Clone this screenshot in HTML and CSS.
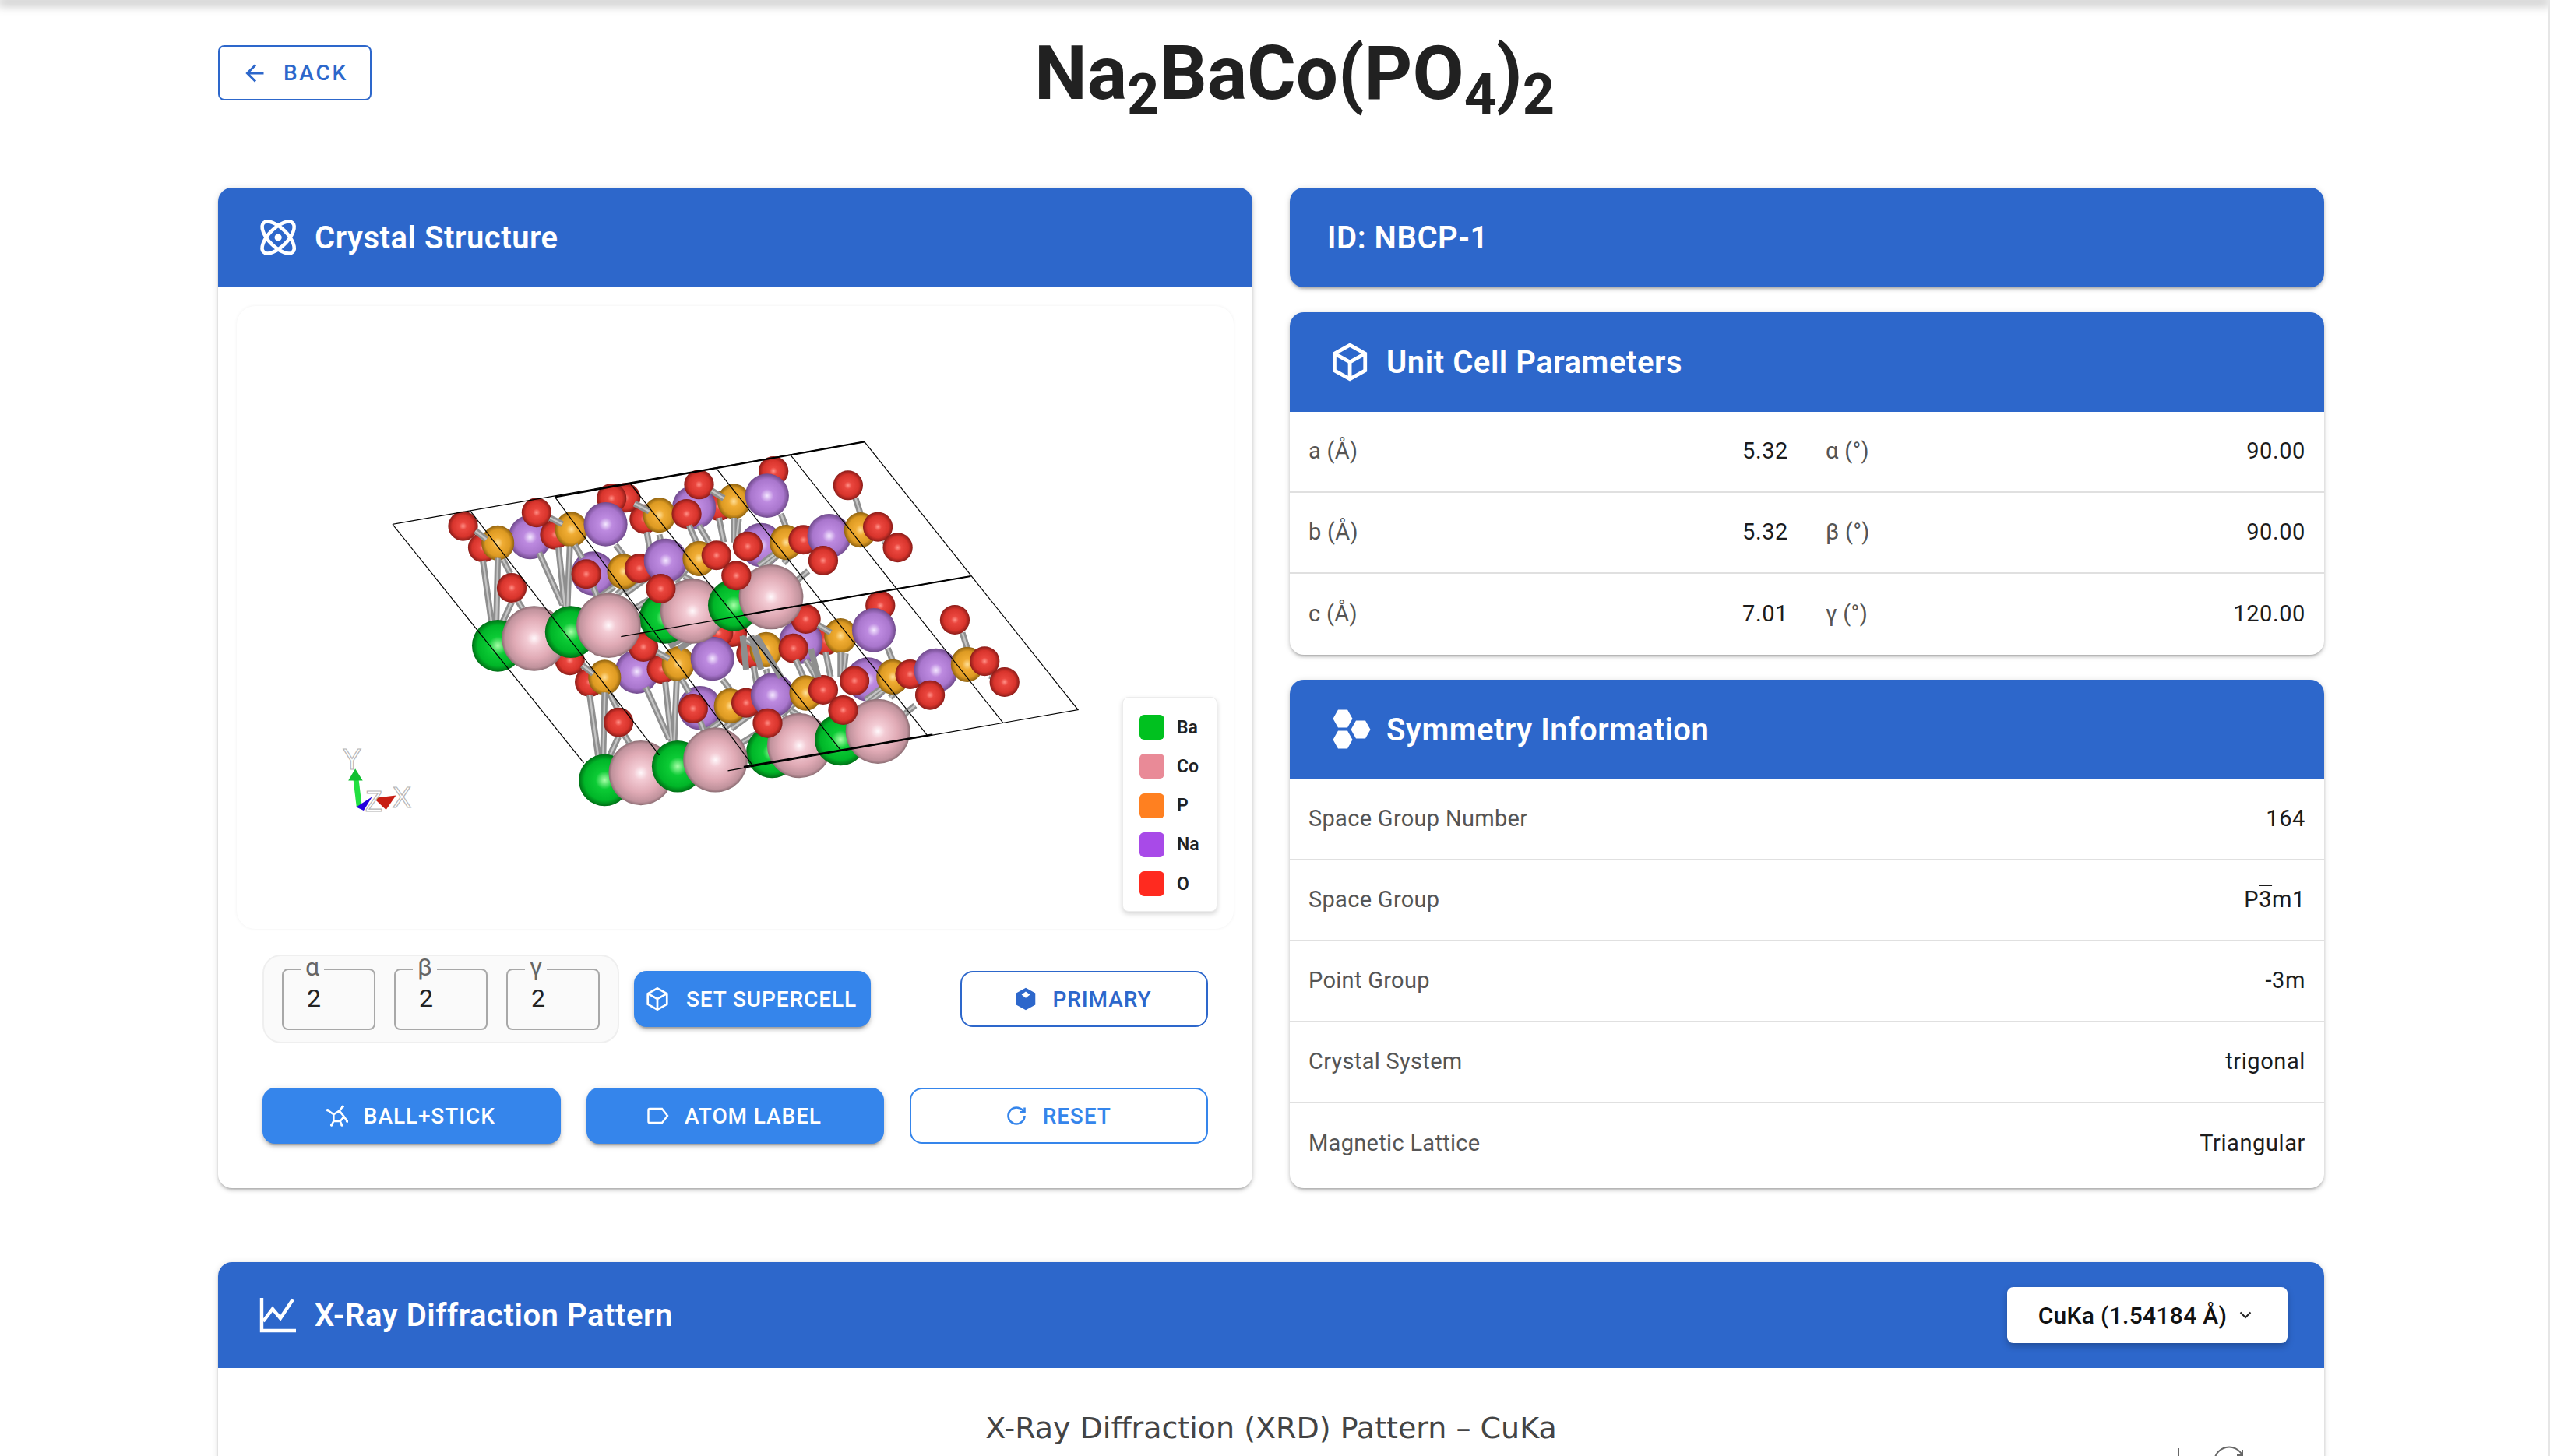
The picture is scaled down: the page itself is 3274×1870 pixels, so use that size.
FILE: index.html
```html
<!DOCTYPE html>
<html lang="en">
<head>
<meta charset="utf-8">
<title>Na2BaCo(PO4)2</title>
<link rel="stylesheet" href="styles.css">
</head>
<body>
<div class="appbar"></div>
<main class="page">
  <header class="top">
    <button class="btn btn-back">
      <svg class="ic-back" viewBox="0 0 24 24"><path d="M19 12H5M12 19l-7-7 7-7"/></svg>
      Back
    </button>
    <h1 class="title">Na<sub>2</sub>BaCo(PO<sub>4</sub>)<sub>2</sub></h1>
  </header>

  <div class="columns">
    <section class="card card-left">
      <div class="card-head">
        <svg class="head-ic atom" viewBox="1 1.500 21 21"><circle cx="12" cy="12" r="1"/><path d="M20.2 20.2c2.04-2.03.02-7.36-4.5-11.9-4.54-4.52-9.87-6.54-11.9-4.5-2.04 2.03-.02 7.36 4.5 11.9 4.54 4.52 9.87 6.54 11.9 4.5Z"/><path d="M15.7 15.7c4.52-4.54 6.54-9.87 4.5-11.9-2.03-2.04-7.36-.02-11.9 4.5-4.52 4.54-6.54 9.87-4.5 11.9 2.03 2.04 7.36.02 11.9-4.5Z"/></svg>
        <h2>Crystal Structure</h2>
      </div>
      <div class="card-body">
        <div class="viewer">
          <svg class="scene" viewBox="0 0 1280 800">
            <defs>
              <radialGradient id="gO"><stop offset="0" stop-color="#ff9188"/><stop offset=".25" stop-color="#ea463e"/><stop offset=".72" stop-color="#d8342c"/><stop offset="1" stop-color="#8a1c18"/></radialGradient>
              <radialGradient id="gP"><stop offset="0" stop-color="#ffe09a"/><stop offset=".3" stop-color="#f0ac33"/><stop offset=".75" stop-color="#dd9a22"/><stop offset="1" stop-color="#8f6210"/></radialGradient>
              <radialGradient id="gNa"><stop offset="0" stop-color="#f4e8ff"/><stop offset=".3" stop-color="#bd8ae0"/><stop offset=".75" stop-color="#a976cd"/><stop offset="1" stop-color="#704a8c"/></radialGradient>
              <radialGradient id="gBa"><stop offset="0" stop-color="#a8ffa8"/><stop offset=".35" stop-color="#0ccb35"/><stop offset=".78" stop-color="#00b628"/><stop offset="1" stop-color="#006f16"/></radialGradient>
              <radialGradient id="gCo"><stop offset="0" stop-color="#fff8fb"/><stop offset=".22" stop-color="#f3cbd4"/><stop offset=".62" stop-color="#e0aab5"/><stop offset=".9" stop-color="#c0929c"/><stop offset="1" stop-color="#8a6c72"/></radialGradient>
              <ellipse id="O" rx="30" ry="57" fill="url(#gO)"/>
              <ellipse id="P" rx="33" ry="68" fill="url(#gP)"/>
              <ellipse id="Na" rx="44" ry="85" fill="url(#gNa)"/>
              <ellipse id="Ba" rx="52" ry="100" fill="url(#gBa)"/>
              <ellipse id="Co" rx="65" ry="125" fill="url(#gCo)"/>
              <path id="bondPath" d="M345 540L362 775M375 530L372 775M385 535L400 590M403 700L385 775M415 695L425 725M458 510L505 710M497 490L510 720M520 485L515 720M530 480L545 530M612 480L628 520M565 630L575 680M610 640L580 680M650 610L615 670M680 600L630 670M700 440L705 480M675 430L682 510M760 405L775 470M780 405L800 470M820 375L830 470M850 375L850 470M860 380L855 470M945 360L955 410M1095 300L1105 360M1150 465L1165 475M330 425L352 458M480 375L505 400M650 320L680 350M805 270L830 300M1080 470L1030 530M935 510L900 560M945 510L905 570M975 500L950 550M1000 580L975 620M755 575L730 620M735 625L805 670M740 640L805 680M735 655L800 690M750 600L820 680M885 630L895 640M650 725L680 690M735 680L745 700"/>
              <g id="motif">
                <use href="#O" x="930" y="195"/><use href="#O" x="820" y="330"/><use href="#O" x="670" y="380"/>
                <use href="#Na" x="770" y="335"/><use href="#O" x="632" y="298"/><use href="#O" x="604" y="300"/>
                <use href="#O" x="345" y="490"/><use href="#Na" x="440" y="450"/><use href="#O" x="490" y="440"/>
                <use href="#P" x="375" y="472"/><use href="#P" x="523" y="420"/><use href="#P" x="700" y="365"/><use href="#P" x="850" y="312"/>
                <use href="#Na" x="592" y="400"/><use href="#Na" x="917" y="290"/>
                <use href="#O" x="305" y="407"/><use href="#O" x="453" y="355"/><use href="#O" x="780" y="247"/><use href="#O" x="755" y="360"/>
                <use href="#Na" x="567" y="590"/><use href="#Na" x="905" y="480"/>
                <g class="bond-dark"><use href="#bondPath"/></g>
                <g class="bond-light"><use href="#bondPath"/></g>
                <use href="#P" x="628" y="582"/><use href="#O" x="660" y="570"/><use href="#P" x="955" y="470"/><use href="#O" x="990" y="460"/>
                <use href="#Na" x="1042" y="445"/><use href="#P" x="1105" y="422"/><use href="#O" x="1140" y="410"/><use href="#O" x="1180" y="490"/><use href="#O" x="1080" y="250"/>
                <use href="#Na" x="713" y="540"/><use href="#P" x="780" y="532"/><use href="#O" x="815" y="520"/><use href="#O" x="553" y="592"/><use href="#O" x="878" y="485"/><use href="#O" x="1030" y="540"/>
                <use href="#O" x="403" y="645"/>
                <use href="#Ba" x="712" y="760"/><use href="#Co" x="767" y="735"/><use href="#Ba" x="850" y="712"/><use href="#Co" x="925" y="680"/>
                <use href="#Ba" x="375" y="868"/><use href="#Co" x="448" y="840"/><use href="#Ba" x="522" y="815"/><use href="#Co" x="598" y="790"/>
                <use href="#O" x="703" y="648"/><use href="#O" x="855" y="598"/>
              </g>
            </defs>
            <g transform="translate(96 147) scale(.6378 .3333)">
              <use href="#motif" x="215" y="518"/>
              <g class="bond-dark"><path d="M868 830L875 960M885 830L905 960M895 830L945 990M720 870L800 780M740 880L845 740M1005 880L1020 990"/></g>
              <use href="#motif"/>
              <g class="cell">
                <path d="M163 400L1113 82L1543 1115L838 1350M163 400L548 1320M623 833L1327 600M320 350L700 1290M490 295L890 1335M640 240L1065 1270M815 185L1240 1215M965 135L1392 1165"/>
              </g>
              <g class="cell-thick"><path d="M490 295L1113 82M870 750L1327 600M870 1335L1250 1210"/></g>
              <g class="axis">
                <path class="ax-shaft" d="M96 1488L89 1375"/>
                <path class="ax-head" d="M88 1342L103 1388H74Z"/>
                <path class="ax-blue" d="M122 1450L90 1490L105 1503Z"/>
                <path class="ax-red" d="M125 1455L170 1445L150 1500Z"/>
              </g>
            </g>
            <text class="ax-label" x="148" y="595">Y</text>
            <text class="ax-label" x="176" y="649">Z</text>
            <text class="ax-label" x="212" y="644">X</text>
          </svg>
          <ul class="legend">
            <li><span class="sw sw-ba"></span>Ba</li>
            <li><span class="sw sw-co"></span>Co</li>
            <li><span class="sw sw-p"></span>P</li>
            <li><span class="sw sw-na"></span>Na</li>
            <li><span class="sw sw-o"></span>O</li>
          </ul>
        </div>

        <div class="ctrl-row">
          <div class="supercell">
            <fieldset class="num"><legend>α</legend><input value="2" aria-label="alpha"></fieldset>
            <fieldset class="num"><legend>β</legend><input value="2" aria-label="beta"></fieldset>
            <fieldset class="num"><legend>γ</legend><input value="2" aria-label="gamma"></fieldset>
          </div>
          <button class="btn btn-fill btn-set">
            <svg class="btn-ic" viewBox="2 1 20 22"><path d="M12 2L21 7V17L12 22L3 17V7ZM3 7L12 12L21 7M12 12V22"/></svg>
            Set Supercell
          </button>
          <button class="btn btn-line btn-primary">
            <svg class="btn-ic solid" viewBox="2 1 20 22"><path d="M12 1.5L21 6.500V17.500L12 22.500L3 17.500V6.500Z"/><path class="notch" d="M12 5L16 8L12 11L8 8Z"/></svg>
            Primary
          </button>
        </div>

        <div class="act-row">
          <button class="btn btn-fill">
            <svg class="btn-ic ball" viewBox="0 0 28 28"><path d="M1.700 6.700L9.300 12.300L16.700 7.700L21 2.300M16.700 7.700L22.700 15L26.700 21M22.700 15L17.700 21H9.300L6.700 26M9.300 21V12.300M17.700 21L20 26"/><circle cx="1.700" cy="6.700" r="1.800"/><circle cx="21" cy="2.300" r="1.800"/><circle cx="26.700" cy="21" r="1.800"/><circle cx="6.700" cy="26" r="1.800"/><circle cx="20" cy="26" r="1.800"/></svg>
            Ball+Stick
          </button>
          <button class="btn btn-fill">
            <svg class="btn-ic tag" viewBox="0 0 28 22"><path d="M3 2H19L26 11L19 20H3Q1.500 20 1.500 18.500V3.500Q1.500 2 3 2Z"/></svg>
            Atom Label
          </button>
          <button class="btn btn-line btn-reset">
            <svg class="btn-ic reset" viewBox="0 0 24 24"><path d="M21 12a9 9 0 1 1-9-9c2.520 0 4.930 1 6.740 2.740L21 8"/><path d="M21 3v5h-5"/></svg>
            Reset
          </button>
        </div>
      </div>
    </section>

    <div class="right">
      <section class="card"><div class="card-head card-head-id"><h2>ID: NBCP-1</h2></div></section>

      <section class="card">
        <div class="card-head">
          <svg class="head-ic" viewBox=".5 1 22 22"><path d="M12 2L21 7V17L12 22L3 17V7ZM3 7L12 12L21 7M12 12V22"/></svg>
          <h2>Unit Cell Parameters</h2>
        </div>
        <div class="rows rows-2">
          <div class="row"><span class="k">a (Å)</span><span class="v">5.32</span></div>
          <div class="row"><span class="k">α (°)</span><span class="v">90.00</span></div>
          <div class="row"><span class="k">b (Å)</span><span class="v">5.32</span></div>
          <div class="row"><span class="k">β (°)</span><span class="v">90.00</span></div>
          <div class="row"><span class="k">c (Å)</span><span class="v">7.01</span></div>
          <div class="row"><span class="k">γ (°)</span><span class="v">120.00</span></div>
        </div>
      </section>

      <section class="card card-grow">
        <div class="card-head">
          <svg class="head-ic filled" viewBox="0 0 48 48"><polygon points="3.500,10 10,-1.500 22,-1.500 28.500,10 22,21.500 10,21.500"/><polygon points="26.500,24 33,12.500 45,12.500 51.500,24 45,35.500 33,35.500"/><polygon points="3.500,37 10,25.500 22,25.500 28.500,37 22,48.500 10,48.500"/></svg>
          <h2>Symmetry Information</h2>
        </div>
        <div class="rows rows-1">
          <div class="row"><span class="k">Space Group Number</span><span class="v">164</span></div>
          <div class="row"><span class="k">Space Group</span><span class="v">P<span class="bar">3</span>m1</span></div>
          <div class="row"><span class="k">Point Group</span><span class="v">-3m</span></div>
          <div class="row"><span class="k">Crystal System</span><span class="v">trigonal</span></div>
          <div class="row"><span class="k">Magnetic Lattice</span><span class="v">Triangular</span></div>
        </div>
      </section>
    </div>
  </div>

  <section class="card card-xrd">
    <div class="card-head card-head-xrd">
      <svg class="head-ic chart" viewBox="1 1 24 24"><path d="M3 2V23H25M4 17L10 9L15 15L23 3"/></svg>
      <h2>X-Ray Diffraction Pattern</h2>
      <button class="select">CuKa (1.54184 Å)
        <svg class="chev" viewBox="0 0 16 10"><path d="M1.500 1.500L8 8L14.500 1.500"/></svg>
      </button>
    </div>
    <div class="xrd-body">
      <div class="xrd-title">X-Ray Diffraction (XRD) Pattern – CuKa</div>
      <svg class="modebar" viewBox="0 0 100 20"><path d="M33 3V20M79 20A19 19 0 0 1 115 12M115 5V12H108"/></svg>
    </div>
  </section>
</main>
</body>
</html>
```

FILE: styles.css
```css
* { box-sizing: border-box; }
html, body { margin: 0; height: 1870px; overflow: hidden; background: #fff; }
body {
  font-family: Roboto, "Liberation Sans", sans-serif;
  color: #222;
  border-right: 2px solid #e6e6e6;
}
.appbar { height: 0; box-shadow: 0 2px 14px 3px rgba(0,0,0,.42); }
.page { width: 2704px; margin-left: 280px; }

.top { display: flex; align-items: flex-start; height: 241px; padding-top: 58px; }
.title {
  flex: 1;
  margin: 0;
  padding-right: 137px;
  text-align: center;
  font-size: 96px;
  font-weight: 700;
  line-height: 72px;
  color: #212121;
  letter-spacing: 0;
}
.title sub { font-size: 72px; line-height: 0; vertical-align: -19px; }

.btn {
  display: flex;
  align-items: center;
  justify-content: center;
  gap: 20px;
  height: 72px;
  padding: 0 2px 0 0;
  font: 500 28px Roboto, sans-serif;
  letter-spacing: .9px;
  text-transform: uppercase;
  border-radius: 16px;
  cursor: pointer;
}
.btn-back {
  width: 197px;
  height: 71px;
  gap: 18px;
  background: #fff;
  border: 2px solid #2d67cb;
  border-radius: 8px;
  color: #2d67cb;
  padding: 0;
  letter-spacing: 2.800px;
}
.ic-back { width: 36px; height: 36px; fill: none; stroke: #2d67cb; stroke-width: 2; }
.btn-fill {
  background: #3585eb;
  color: #fff;
  border: 0;
  box-shadow: 0 6px 2px -4px rgba(0,0,0,.2), 0 4px 4px rgba(0,0,0,.14), 0 2px 10px rgba(0,0,0,.12);
}
.btn-line { background: #fff; }
.btn-primary { border: 2px solid #2d67cb; color: #2d67cb; width: 318px; margin-left: auto; }
.btn-reset { border: 2px solid #3585eb; color: #3585eb; }
.btn-set { width: 304px; gap: 23px; flex: none; }
.btn-ic { width: 28px; height: 30px; flex: none; fill: none; stroke: #fff; stroke-width: 2; }
.btn-ic.solid { fill: #2d67cb; stroke: none; }
.btn-ic.solid .notch { fill: #fff; }
.btn-ic.ball { stroke-width: 2.600; stroke-linecap: round; }
.btn-ic.ball circle { fill: #fff; stroke: none; }
.btn-ic.tag { height: 22px; stroke-width: 2.400; }
.btn-ic.reset { stroke: #3585eb; stroke-width: 2.200; }

.columns { display: grid; grid-template-columns: 1328px 1328px; gap: 48px; }
.right { display: flex; flex-direction: column; gap: 32px; }
.card {
  background: #fff;
  border-radius: 18px;
  overflow: hidden;
  box-shadow: 0 3px 3px -2px rgba(0,0,0,.2), 0 3px 4px rgba(0,0,0,.14), 0 1px 8px rgba(0,0,0,.12);
}
.card-grow { flex: 1; display: flex; flex-direction: column; }
.card-head {
  display: flex;
  align-items: center;
  gap: 24px;
  height: 128px;
  padding-left: 52px;
  background: #2d67cb;
  color: #fff;
  flex: none;
}
.card-head h2 { margin: 0; font-size: 40px; font-weight: 600; letter-spacing: .55px; }
.card-head-id { padding-left: 48px; }
.head-ic { width: 48px; height: 48px; flex: none; fill: none; stroke: #fff; stroke-width: 2.200; overflow: visible; }
.head-ic.atom { stroke-width: 2; }
.head-ic.filled { fill: #fff; stroke: none; }

.card-body { padding: 24px 24px 57px; }
.viewer {
  position: relative;
  height: 800px;
  border-radius: 24px;
  background: #fff;
  box-shadow: 0 0 4px rgba(0,0,0,.06);
}
.scene { display: block; width: 1280px; height: 800px; }
.bond-dark { fill: none; stroke: #8e8e8e; stroke-width: 8px; }
.bond-light { fill: none; stroke: #c4c4c4; stroke-width: 2.500px; }
.bond-dark *, .bond-light * { vector-effect: non-scaling-stroke; }
#bondPath { vector-effect: non-scaling-stroke; }
.cell { fill: none; stroke: #000; stroke-width: 1.200px; }
.cell-thick { fill: none; stroke: #000; stroke-width: 2.200px; }
.cell *, .cell-thick * { vector-effect: non-scaling-stroke; }
.ax-shaft { fill: none; stroke: #22e040; stroke-width: 7px; vector-effect: non-scaling-stroke; }
.ax-head { fill: #10c030; }
.ax-blue { fill: #2200dd; }
.ax-red { fill: #c81e14; }
.ax-label {
  font: 400 36px "Liberation Sans", sans-serif;
  text-anchor: middle;
  fill: #fff;
  stroke: #b5b5b5;
  stroke-width: 1.200px;
}
.legend {
  position: absolute;
  right: 21px;
  bottom: 22px;
  width: 122px;
  height: 276px;
  margin: 0;
  padding: 22px 0 0 21px;
  list-style: none;
  background: #fff;
  border: 1px solid #ececec;
  border-radius: 8px;
  box-shadow: 0 3px 6px rgba(0,0,0,.16);
}
.legend li {
  display: flex;
  align-items: center;
  gap: 16px;
  height: 32px;
  margin-bottom: 18.300px;
  font-size: 23px;
  font-weight: 600;
}
.sw { width: 32px; height: 32px; border-radius: 6px; }
.sw-ba { background: #00c11f; }
.sw-co { background: #e98a97; }
.sw-p { background: #ff8020; }
.sw-na { background: #a84ae8; }
.sw-o { background: #ff2a1f; }

.ctrl-row { display: flex; align-items: center; gap: 19px; margin: 33px 33px 0; }
.supercell {
  display: flex;
  flex: none;
  gap: 24px;
  width: 458px;
  height: 114px;
  padding: 16px 23px;
  background: #fafafa;
  border: 2px solid #efefef;
  border-radius: 24px;
}
.num {
  flex: none;
  width: 120px;
  height: 79px;
  margin: 0;
  padding: 0;
  border: 2px solid #a8a8a8;
  border-radius: 8px;
  min-width: 0;
}
.num legend {
  position: relative;
  top: -3px;
  margin-left: 22px;
  padding: 0 6px;
  height: 2px;
  line-height: 2px;
  font-size: 32px;
  color: #666;
}
.num input {
  display: block;
  width: 100%;
  height: 72px;
  margin-top: 0;
  padding: 0 0 0 30px;
  border: 0;
  outline: 0;
  background: transparent;
  font: 400 32px Roboto, sans-serif;
  color: #222;
}
.act-row { display: grid; grid-template-columns: repeat(3, 1fr); gap: 33px; margin: 57px 33px 0; }

.rows { display: grid; flex: 1; grid-auto-rows: 104px; align-content: start; }
.rows-2 { grid-template-columns: 1fr 1fr; }
.rows-1 { grid-template-columns: 1fr; }
.row {
  display: flex;
  align-items: center;
  justify-content: space-between;
  padding: 0 24px 2px;
  border-bottom: 2px solid #e0e0e0;
  font-size: 29px;
  letter-spacing: .3px;
}
.rows-2 .row:nth-last-child(-n+2), .rows-1 .row:last-child { border-bottom: 0; }
.k { color: #555; }
.v { color: #1c1c1c; letter-spacing: .6px; }
.bar { text-decoration: overline; }

.card-xrd { margin-top: 95px; height: 400px; border-radius: 18px; }
.card-head-xrd { height: 136px; padding-right: 47px; }
.select {
  display: flex;
  align-items: center;
  justify-content: center;
  gap: 16px;
  width: 360px;
  height: 72px;
  margin-left: auto;
  padding: 0 6px 0 0;
  background: #fff;
  border: 0;
  border-radius: 8px;
  font: 500 30px Roboto, sans-serif;
  letter-spacing: .3px;
  color: #111;
  box-shadow: 0 4px 8px rgba(0,0,0,.25);
}
.chev { width: 16px; height: 10px; fill: none; stroke: #222; stroke-width: 2; }
.xrd-body { position: relative; padding-top: 53px; }
.xrd-title {
  font: 400 38px "DejaVu Sans", sans-serif;
  line-height: 48px;
  text-align: center;
  color: #444;
}
.modebar {
  position: absolute;
  left: 2484px;
  top: 100px;
  width: 100px;
  height: 20px;
  overflow: visible;
  fill: none;
  stroke: #666;
  stroke-width: 2;
}
```
